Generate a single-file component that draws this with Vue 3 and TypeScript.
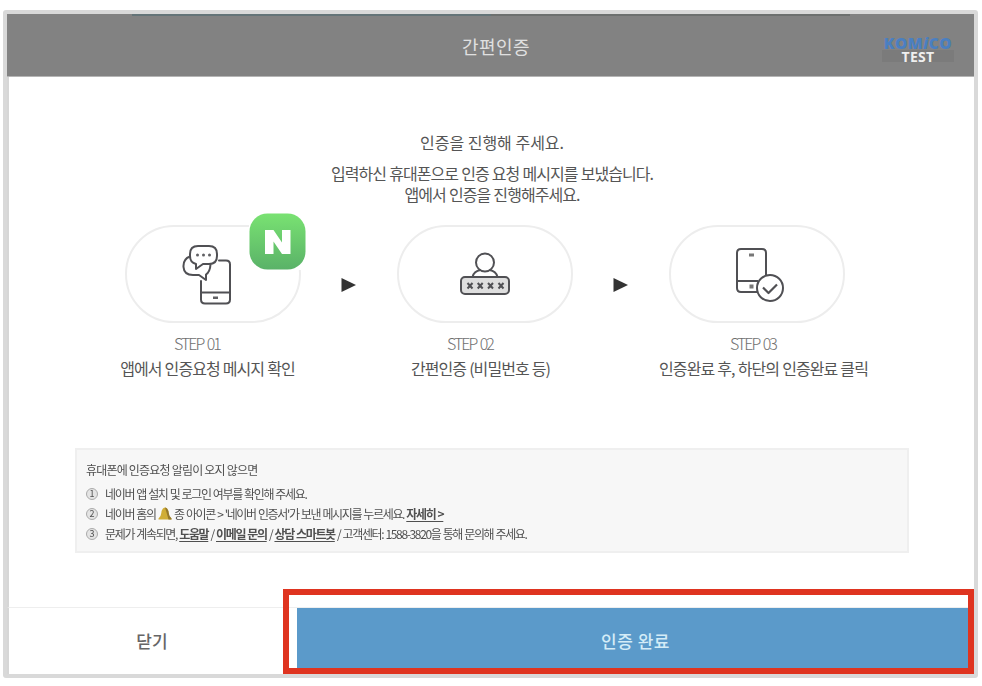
<script setup lang="ts">
interface Step {
  id: string
  icon: 'message' | 'password' | 'done'
  title: string
  text: string
}

const steps: Step[] = [
  { id: 's1', icon: 'message', title: 'STEP 01', text: '앱에서 인증요청 메시지 확인' },
  { id: 's2', icon: 'password', title: 'STEP 02', text: '간편인증 (비밀번호 등)' },
  { id: 's3', icon: 'done', title: 'STEP 03', text: '인증완료 후, 하단의 인증완료 클릭' },
]
</script>

<template>
  <div class="page">
    <div class="window">
      <header class="header">
        <div class="tabline"></div>
        <h1 class="title">간편인증</h1>
        <div class="brand">
          <span class="brand-name">KOM<i>i</i>CO</span>
          <span class="brand-tag">TEST</span>
        </div>
      </header>

      <main class="body">
        <p class="lead">인증을 진행해 주세요.</p>
        <p class="desc">입력하신 휴대폰으로 인증 요청 메시지를 보냈습니다.<br />앱에서 인증을 진행해주세요.</p>

        <div class="steps">
          <template v-for="(step, i) in steps" :key="step.id">
            <svg v-if="i > 0" class="arrow" width="16" height="16" viewBox="0 0 16 16">
              <path d="M0.500 1 L15 8 L0.500 15 Z" fill="#333" />
            </svg>
            <section class="step" :class="step.icon">
              <div class="pill">
                <svg v-if="step.icon === 'message'" class="glyph" width="50" height="62" viewBox="0 0 50 62">
                  <g fill="none" stroke="#505054" stroke-width="2" stroke-linejoin="round" stroke-linecap="round">
                    <path d="M37 16.500 H44 Q48 16.500 48 20.500 V55.500 Q48 59.500 44 59.500 H23 Q19 59.500 19 55.500 V37" />
                    <path d="M19 48.500 H48" />
                    <path d="M16 2 H27 Q35 2 35 10 V12 Q35 20 27 20 H21 L14 25 V20 Q8 18.500 8 12 V10 Q8 2 16 2 Z" />
                    <path d="M8 12.500 Q1 15 1.500 23 Q2 31 11 31 H17 L24 36 V30.500 Q28 28 28.500 20.500" />
                  </g>
                  <g fill="#606064"><circle cx="15.500" cy="11" r="1.500" /><circle cx="21.500" cy="11" r="1.500" /><circle cx="27.500" cy="11" r="1.500" /><rect x="31" y="52.500" width="5" height="2.500" /></g>
                </svg>
                <svg v-else-if="step.icon === 'password'" class="glyph" width="52" height="44" viewBox="0 0 52 44">
                  <g fill="none" stroke="#505054" stroke-width="2">
                    <circle cx="26" cy="10.500" r="9" />
                    <path d="M13.500 25 Q15 19 21.500 18 M30.500 18 Q37 19 38.500 25" />
                    <rect x="2" y="25" width="48" height="17" rx="4" fill="#dedede" />
                    <path d="M8.500 31 l5 5.500 m0 -5.500 l-5 5.500 M18.700 31 l5 5.500 m0 -5.500 l-5 5.500 M29 31 l5 5.500 m0 -5.500 l-5 5.500 M39.500 31 l5 5.500 m0 -5.500 l-5 5.500" />
                  </g>
                </svg>
                <svg v-else class="glyph" width="50" height="56" viewBox="0 0 50 56">
                  <g fill="none" stroke="#505054" stroke-width="2" stroke-linejoin="round">
                    <path d="M23 45 H7 Q3 45 3 41 V6 Q3 2 7 2 H28 Q32 2 32 6 V29" />
                    <path d="M3 34 H24" />
                    <circle cx="36" cy="41" r="13" />
                    <path d="M29 40.500 L34.500 46 L43 37.500" stroke-width="2.200" />
                  </g>
                  <g fill="#777"><rect x="15" y="6.500" width="5" height="3" /><rect x="15.500" y="37.500" width="4" height="4" /></g>
                </svg>
                <div v-if="step.icon === 'message'" class="badge">
                  <svg width="57" height="57" viewBox="0 0 57 57">
                    <defs>
                      <linearGradient id="naver" x1="0" y1="0" x2="0" y2="1">
                        <stop offset="0" stop-color="#79e272" />
                        <stop offset="1" stop-color="#5ab268" />
                      </linearGradient>
                    </defs>
                    <rect x="0.500" y="0.500" width="56" height="56" rx="18" fill="url(#naver)" />
                    <path d="M16 17 H24.500 L33 29.500 V17 H41.500 V41 H33 L24.500 28.500 V41 H16 Z" fill="#fff" />
                  </svg>
                </div>
              </div>
              <span class="step-title">{{ step.title }}</span>
              <span class="step-text">{{ step.text }}</span>
            </section>
          </template>
        </div>

        <div class="notice">
          <p class="notice-title">휴대폰에 인증요청 알림이 오지 않으면</p>
          <ol class="tips">
            <li><span class="num">1</span><span class="tip">네이버 앱 설치 및 로그인 여부를 확인해 주세요.</span></li>
            <li>
              <span class="num">2</span>
              <span class="tip">네이버 홈의 <svg class="bell" width="14" height="14" viewBox="0 0 14 14"><path d="M7 0.500 Q10.500 1.500 10.700 6 L11.500 9 L13.500 11.500 V12.500 H0.500 V11.500 L2.500 9 L3.300 6 Q3.500 1.500 7 0.500 Z" fill="#d0ad36" /><path d="M7 0.500 Q10.500 1.500 10.700 6 L11.500 9 L13.500 11.500 V12.500 H10.500 Q9 7 7 0.500 Z" fill="#94782c" /></svg> 종 아이콘 &gt; '네이버 인증서'가 보낸 메시지를 누르세요. <a class="link">자세히 &gt;</a></span>
            </li>
            <li>
              <span class="num">3</span>
              <span class="tip">문제가 계속되면, <a class="link">도움말</a> / <a class="link">이메일 문의</a> / <a class="link">상담 스마트봇</a> / 고객센터: 1588-3820을 통해 문의해 주세요.</span>
            </li>
          </ol>
        </div>
      </main>

      <footer class="footer">
        <button class="btn close" type="button">닫기</button>
        <button class="btn confirm" type="button">인증 완료</button>
        <div class="highlight"></div>
      </footer>
    </div>
  </div>
</template>

<style>
body { background: #fff; }
</style>

<style scoped>
* { box-sizing: border-box; }
.page {
  width: 982px;
  height: 686px;
  padding: 10px 4px 8px 3px;
  overflow: hidden;
  font-family: "Noto Sans CJK KR", "Noto Sans", sans-serif;
  color: #555;
}
.window {
  position: relative;
  height: 668px;
  border: 4px solid #d9d9d9;
  border-radius: 3px;
  display: flex;
  flex-direction: column;
  background: #fff;
}
.header {
  position: relative;
  flex: none;
  height: 63px;
  background: #828282;
  border-bottom: 1px solid #b5b5b5;
  display: flex;
  align-items: center;
  justify-content: center;
}
.tabline {
  position: absolute;
  top: 0;
  left: 125px;
  width: 718px;
  height: 2px;
  background: linear-gradient(90deg, #647478 50%, #6d706f 50%);
}
.title {
  margin: 1px 0 0 11px;
  font-size: 18px;
  line-height: 26px;
  font-weight: 400;
  letter-spacing: 0.500px;
  color: #e0e0e0;
}
.brand {
  position: absolute;
  top: 22px;
  left: 874px;
  width: 74px;
  display: flex;
  flex-direction: column;
  align-items: center;
}
.brand-name {
  font: 800 15.500px/14px "Open Sans", sans-serif;
  letter-spacing: 0.500px;
  color: #4a7fc1;
  white-space: nowrap;
}
.brand-tag {
  width: 72px;
  height: 12px;
  background: #7b7b7b;
  text-align: center;
  font: 700 14px/14px "Open Sans", sans-serif;
  letter-spacing: 0.300px;
  color: #efefef;
}
.body {
  flex: 1;
  border-left: 2px solid #d6d6d6;
  padding-top: 53px;
  position: relative;
  display: flex;
  flex-direction: column;
}
p { margin: 0; }
.lead, .desc { text-align: center; font-size: 16px; white-space: nowrap; }
.lead { line-height: 24px; padding-left: 1px; }
.desc { margin-top: 9px; line-height: 21px; letter-spacing: -0.950px; word-spacing: 0.500px; padding-left: 1px; }
.steps {
  margin: 20px 0 0 116px;
  display: flex;
  align-items: flex-start;
}
.step {
  width: 176px;
  display: flex;
  flex-direction: column;
  align-items: center;
  white-space: nowrap;
}
.pill {
  position: relative;
  width: 176px;
  height: 98px;
  border: 2px solid #ededed;
  border-radius: 56px;
  display: flex;
  align-items: center;
  justify-content: center;
}
.glyph { display: block; }
.message .glyph { margin: 1px 12px 0 0; }
.done .glyph { margin: 2px 0 0 3px; }
.badge {
  position: absolute;
  top: -14px;
  left: 122px;
  width: 57px;
  height: 57px;
  background: #fff;
}
.badge svg { display: block; }
.arrow { margin: 52px 40px 0 40px; flex: none; }
.step-title {
  margin-top: 8px;
  font-size: 16px;
  line-height: 24px;
  font-weight: 300;
  letter-spacing: -2px;
  word-spacing: 2px;
  color: #707070;
}
.step-text {
  margin-top: 1px;
  font-size: 16px;
  line-height: 24px;
  letter-spacing: -0.950px;
  word-spacing: 0.500px;
}
.message .step-title { margin-right: 32px; }
.password .step-title { margin-right: 30px; }
.done .step-title { margin-right: 8px; }
.message .step-text { margin-right: 11px; }
.password .step-text { margin-right: 9px; }
.done .step-text { margin-left: 13px; }
.notice {
  position: absolute;
  top: 371px;
  left: 66px;
  width: 834px;
  height: 105px;
  border: 2px solid #efefef;
  background: #f7f7f7;
  padding: 11px 0 0 9px;
  font-size: 12px;
  color: #505050;
}
.notice-title { line-height: 18px; letter-spacing: -0.800px; filter: blur(0.600px); }
.tips { list-style: none; margin: 5px 0 0; padding: 0; filter: blur(0.600px); }
.tips li { display: flex; align-items: center; height: 20px; white-space: nowrap; }
.num {
  width: 12px;
  height: 12px;
  margin-right: 7px;
  border: 1px solid #aaa;
  border-radius: 50%;
  background: #e4e4e4;
  font-size: 9px;
  line-height: 10px;
  text-align: center;
}
.tip { letter-spacing: -1.350px; word-spacing: 0.850px; line-height: 20px; }
.bell { vertical-align: -2px; }
.link { font-weight: 700; text-decoration: underline; text-underline-offset: 2px; }
.footer {
  position: relative;
  flex: none;
  height: 67px;
  display: flex;
  border-top: 1px solid #eee;
  border-left: 2px solid #d6d6d6;
}
.btn {
  border: 0;
  padding: 0 0 2px;
  background: #fff;
  font-family: inherit;
  font-size: 17px;
  font-weight: 500;
  color: #666;
}
.close { width: 288px; padding-right: 2px; }
.confirm { flex: 1; background: #5b9aca; color: #d4ecf7; letter-spacing: 0.500px; }
.highlight {
  position: absolute;
  left: 274px;
  top: -19px;
  width: 691px;
  height: 85px;
  border: 6px solid #df3420;
}
</style>
